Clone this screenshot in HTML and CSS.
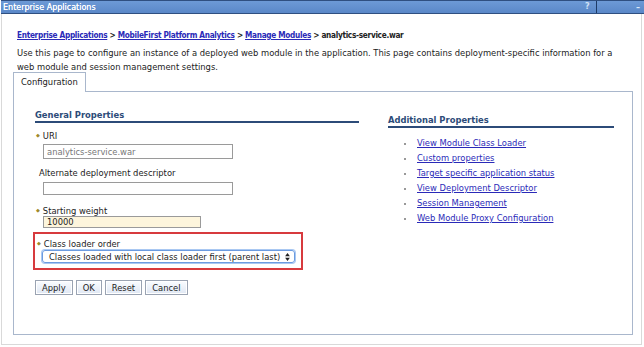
FILE: index.html
```html
<!DOCTYPE html>
<html>
<head>
  <meta charset="UTF-8">
  <link rel="stylesheet" href="styles.css">
</head>
<body>
  <div class="portlet">
    <div class="titlebar">
      <span class="title">Enterprise Applications</span>
      <span class="tb-help">?</span>
      <span class="tb-min">&ndash;</span>
    </div>

    <div class="content">
      <div class="crumbs">
        <a href="#">Enterprise Applications</a> &gt;
        <a href="#">MobileFirst Platform Analytics</a> &gt;
        <a href="#">Manage Modules</a> &gt;
        <span>analytics-service.war</span>
      </div>
      <p class="desc">Use this page to configure an instance of a deployed web module in the application. This page contains deployment-specific information for a web module and session management settings.</p>

      <div class="tabs">
        <div class="tab">Configuration</div>
      </div>

      <div class="panel">
        <div class="col-left">
          <h4 class="section">General Properties</h4>

          <div class="field f-uri">
            <label class="req">URI</label>
            <input class="text" type="text" value="analytics-service.war" readonly>
          </div>

          <div class="field f-alt">
            <label>Alternate deployment descriptor</label>
            <input class="text" type="text">
          </div>

          <div class="field f-weight">
            <label class="req">Starting weight</label>
            <input class="text weight" type="text" value="10000">
          </div>

          <div class="highlight">
            <label class="req">Class loader order</label>
            <div class="select">
              <span>Classes loaded with local class loader first (parent last)</span>
              <svg viewBox="0 0 6 10" width="5" height="8"><path d="M3 0L6 4H0z M3 10L0 6h6z" fill="#222"/></svg>
            </div>
          </div>

          <div class="buttons">
            <button>Apply</button>
            <button>OK</button>
            <button>Reset</button>
            <button>Cancel</button>
          </div>
        </div>

        <div class="col-right">
          <h4 class="section">Additional Properties</h4>
          <ul class="links">
            <li><a href="#">View Module Class Loader</a></li>
            <li><a href="#">Custom properties</a></li>
            <li><a href="#">Target specific application status</a></li>
            <li><a href="#">View Deployment Descriptor</a></li>
            <li><a href="#">Session Management</a></li>
            <li><a href="#">Web Module Proxy Configuration</a></li>
          </ul>
        </div>
      </div>
    </div>
  </div>
</body>
</html>
```

FILE: styles.css
```css
body {
  margin: 0;
  font-family: 'DejaVu Sans', Verdana, sans-serif;
  font-size: 8.4px;
  color: #222;
  background: #fff;
  width: 644px;
  height: 347px;
  overflow: hidden;
}

.portlet {
  margin: 0 2px 0 1px;
  height: 345px;
  border: 1px solid #d9d9d9;
  border-top: none;
  box-sizing: border-box;
}

.titlebar {
  height: 14px;
  margin: 0 -3px 0 -1px;
  background: linear-gradient(#6d9ad6, #5a88c8);
  border-top: 1px solid #2f4f80;
  border-bottom: 1px solid #2f4f80;
  box-sizing: border-box;
  display: flex;
  align-items: center;
  color: #fff;
  font-size: 8px;
}

.title {
  flex: 1;
  padding-left: 2px;
  text-shadow: 0 0 0.4px #fff;
}

.tb-help {
  width: 11px;
  color: #cfe0f5;
  font-weight: bold;
  border-right: 1px solid #1d3a66;
  height: 12px;
  line-height: 12px;
}

.tb-min {
  width: 47px;
  text-align: right;
  padding-right: 4px;
  box-sizing: border-box;
  color: #dbe8f8;
  font-weight: bold;
}

.content {
  padding: 15px 0 0 15px;
}

a {
  color: #2a2ab8;
  text-decoration: underline;
}

.crumbs {
  font-family: 'DejaVu Sans Condensed', 'DejaVu Sans', sans-serif;
  font-stretch: condensed;
  font-weight: bold;
  font-size: 8.2px;
  letter-spacing: -0.3px;
  color: #222;
  line-height: 12px;
}

.desc {
  margin: 5px 12px 0 0;
  line-height: 14px;
}

.tabs {
  display: flex;
  margin: -2px 0 0 -4px;
}

.tab {
  border: 1px solid #a9b7cc;
  border-bottom: none;
  background: #fff;
  padding: 0 7px;
  height: 19px;
  line-height: 18px;
  position: relative;
  z-index: 1;
  margin-bottom: -1px;
}

.panel {
  margin-left: -4px;
  width: 620px;
  height: 244px;
  border: 1px solid #a9b7cc;
  box-sizing: border-box;
  display: flex;
  padding: 18px 0 0 21px;
}

.col-left {
  width: 324px;
}

.col-right {
  margin: 5px 0 0 29px;
  width: 226px;
}

.section {
  margin: 0;
  font-size: 8.4px;
  color: #2c4b78;
  font-weight: bold;
  border-bottom: 2px solid #2c4b78;
  line-height: 11px;
}

.field {
  padding-left: 4px;
}

label {
  display: block;
  line-height: 12px;
}

.req::before {
  content: '\25C6';
  color: #a08a2a;
  font-size: 5px;
  margin: 0 3px 0 -3px;
  vertical-align: 2px;
}

.text {
  display: block;
  width: 190px;
  height: 15px;
  margin-left: 4px;
  border: 1px solid #9a9a9a;
  padding: 0 3px;
  box-sizing: border-box;
  font-family: 'DejaVu Sans', Verdana, sans-serif;
  font-size: 8.4px;
  color: #777;
  background: #fff;
}

.f-uri {
  margin-top: 6px;
}

.f-uri label {
  margin-bottom: 2px;
}

.f-alt {
  margin-top: 8px;
}

.f-alt label {
  margin-bottom: 3px;
}

.f-alt .text {
  height: 13px;
}

.f-weight {
  margin-top: 9px;
}

.f-weight label {
  margin-bottom: -1px;
}

.weight {
  width: 158px;
  height: 12px;
  background: #fdf5dc;
  color: #222;
}

.highlight {
  margin: 4px 0 0 -2px;
  width: 270px;
  height: 38px;
  border: 2px solid #d73a3e;
  box-sizing: border-box;
  padding: 3px 0 0 5px;
}

.select {
  display: flex;
  align-items: center;
  width: 253px;
  height: 13px;
  box-sizing: border-box;
  margin-left: 2px;
  border: 1px solid #6b9be0;
  border-radius: 3px;
  box-shadow: 0 0 0 1px #a9c8f2;
  padding: 0 4px 0 6px;
  color: #222;
}

.select span {
  flex: 1;
}

.buttons {
  display: flex;
  gap: 3px;
  margin-top: 10px;
}

button {
  font-family: 'DejaVu Sans', Verdana, sans-serif;
  font-size: 8.4px;
  color: #222;
  height: 15px;
  padding: 0 6px;
  border: 1px solid #9aa3b2;
  background: linear-gradient(#fafcff, #dfe7f3);
  box-shadow: inset 0 0 0 1px #fff;
}

.links {
  list-style: none;
  margin: 8px 0 0;
  padding: 0 0 0 16px;
}

.links li {
  line-height: 15px;
  position: relative;
  padding-left: 13px;
}

.links li::before {
  content: '';
  position: absolute;
  left: 0;
  top: 7px;
  width: 2px;
  height: 2px;
  background: #999;
}
```
